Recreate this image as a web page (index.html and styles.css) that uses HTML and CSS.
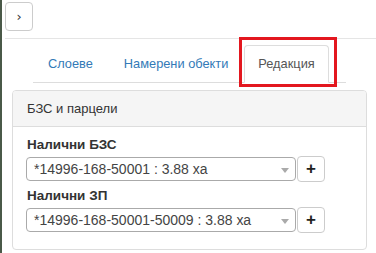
FILE: index.html
```html
<!DOCTYPE html>
<html lang="bg">
<head>
    <meta charset="UTF-8">
    <title>Редакция</title>
    <link rel="stylesheet" href="styles.css">
</head>
<body>
    <div class="page">
        <div class="topbar">
            <button class="toggle">›</button>
        </div>

        <ul class="tabs">
            <li><a href="#">Слоеве</a></li>
            <li><a href="#">Намерени обекти</a></li>
            <li class="active"><a href="#">Редакция</a></li>
        </ul>

        <div class="panel">
            <div class="panel-heading">БЗС и парцели</div>
            <div class="panel-body">
                <div class="form-group">
                    <label>Налични БЗС</label>
                    <div class="select-row">
                        <div class="select">
                            <span>*14996-168-50001 : 3.88 ха</span>
                            <b class="arrow"></b>
                        </div>
                        <button class="add">+</button>
                    </div>
                </div>
                <div class="form-group">
                    <label>Налични ЗП</label>
                    <div class="select-row">
                        <div class="select">
                            <span>*14996-168-50001-50009 : 3.88 ха</span>
                            <b class="arrow"></b>
                        </div>
                        <button class="add">+</button>
                    </div>
                </div>
            </div>
        </div>
    </div>
</body>
</html>
```

FILE: styles.css
```css
* {
    box-sizing: border-box;
}
body {
    margin: 0;
    font-family: "Liberation Sans", Arial, sans-serif;
    font-size: 14px;
    color: #333;
    background-color: #fff;
}
.page {
    height: 253px;
    border-left: 2px solid #4a5948;
    padding-left: 3px;
    overflow: hidden;
}
.topbar {
    height: 39px;
    padding-top: 2px;
    border-bottom: 1px solid #e5e5e5;
}
.toggle {
    width: 28px;
    height: 29px;
    padding: 0;
    border: 1px solid #ccc;
    border-radius: 4px;
    background-color: #fff;
    color: #333;
    font-family: "DejaVu Sans", sans-serif;
    font-size: 13px;
    line-height: 25px;
}
.tabs {
    display: flex;
    list-style: none;
    margin: 6px 30px 0 28px;
    padding: 0;
    border-bottom: 1px solid #ddd;
    font-size: 12.8px;
}
.tabs li {
    flex-shrink: 0;
    margin-bottom: -1px;
    margin-right: 1px;
    white-space: nowrap;
}
.tabs a {
    display: block;
    padding: 8px 14px;
    line-height: 20px;
    border: 1px solid transparent;
    border-radius: 4px 4px 0 0;
    color: #337ab7;
    text-decoration: none;
}
.tabs .active {
    position: relative;
}
.tabs .active a {
    padding: 8px 13px;
    color: #555;
    background-color: #fff;
    border-color: #ddd;
    border-bottom-color: transparent;
}
.tabs .active::after {
    content: "";
    position: absolute;
    left: -5px;
    right: -8px;
    top: -8px;
    bottom: -4px;
    border: 3px solid #e3171f;
    pointer-events: none;
}
.panel {
    margin: 7px 9px 0 7px;
    border: 1px solid #ddd;
    border-radius: 4px;
}
.panel-heading {
    padding: 8px 14px;
    line-height: 19px;
    font-size: 13px;
    background-color: #f5f5f5;
    border-bottom: 1px solid #ddd;
    border-radius: 3px 3px 0 0;
}
.panel-body {
    padding: 8px 14px 16px 14px;
}
.form-group label {
    display: block;
    font-weight: bold;
    font-size: 13.5px;
    line-height: 20px;
}
.form-group + .form-group {
    margin-top: 4px;
}
.select-row {
    display: flex;
    align-items: center;
    gap: 1px;
    margin-top: 1px;
}
.select {
    position: relative;
    width: 270px;
    height: 24px;
    margin-left: -1px;
    padding: 0 7px;
    line-height: 22px;
    border: 1px solid #aaa;
    border-radius: 4px;
    color: #444;
    white-space: nowrap;
}
.arrow {
    position: absolute;
    right: 6px;
    top: 10px;
    border-style: solid;
    border-width: 5px 4px 0 4px;
    border-color: #aaa transparent transparent transparent;
}
.add {
    width: 28px;
    height: 26px;
    padding: 0;
    border: 1px solid #ccc;
    border-radius: 4px;
    background-color: #fff;
    color: #222;
    font-family: "Liberation Sans", Arial, sans-serif;
    font-size: 17px;
    font-weight: bold;
    line-height: 22px;
}
```
